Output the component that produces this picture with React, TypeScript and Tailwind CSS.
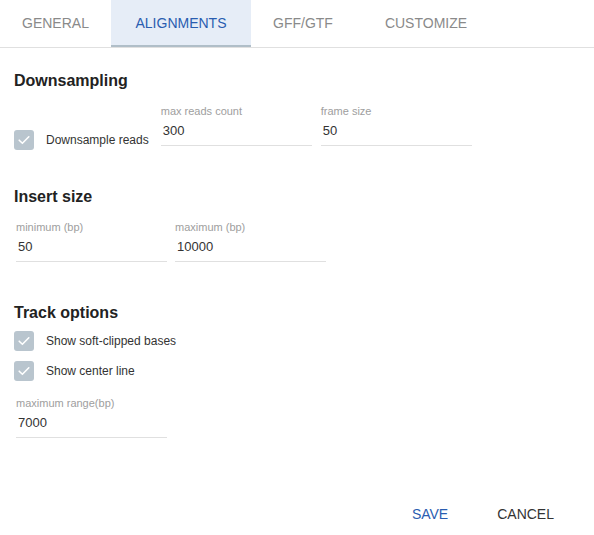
import React from "react";

const tabs = [
  { name: "GENERAL", w: "w-[111px]" },
  { name: "ALIGNMENTS", w: "w-[140px]" },
  { name: "GFF/GTF", w: "w-[104px]" },
  { name: "CUSTOMIZE", w: "w-[142px]" },
];

function Check() {
  return (
    <span className="flex h-[20px] w-[20px] shrink-0 items-center justify-center rounded-[3px] bg-[#b9c5ce]">
      <svg width="20" height="20" viewBox="0 0 20 20" fill="none">
        <path
          d="M5.2 10.2 L8.4 13.3 L14.8 6.8"
          stroke="#ffffff"
          strokeWidth="1.6"
          strokeLinecap="round"
          strokeLinejoin="round"
        />
      </svg>
    </span>
  );
}

function Field({ label, value }: { label: string; value: string }) {
  return (
    <div className="w-[151px]">
      <div className="h-[13px] text-[11px] leading-[13px] text-[#9e9e9e]">
        {label}
      </div>
      <div className="mt-[3px] border-b border-[#e0e0e0] pb-[4px] pl-[2px] text-[13px] leading-[20px] text-[#333333]">
        {value}
      </div>
    </div>
  );
}

function Heading({ children }: { children: React.ReactNode }) {
  return (
    <h2 className="text-[16px] font-bold leading-[20px] text-[#222222]">
      {children}
    </h2>
  );
}

export default function App() {
  return (
    <div
      className="h-[535px] w-[594px] bg-white"
      style={{ fontFamily: '"Liberation Sans", Arial, sans-serif' }}
    >
      {/* Tabs */}
      <div className="flex border-b border-[#e0e0e0]">
        {tabs.map((t) => (
          <div
            key={t.name}
            className={
              t.name === "ALIGNMENTS"
                ? `flex h-[47px] ${t.w} items-center justify-center border-b-2 border-[#b0bec8] bg-[#e6edf7] pt-[1px] text-[14px] text-[#2a5db0]`
                : `flex h-[47px] ${t.w} items-center justify-center border-b-2 border-transparent pt-[1px] text-[14px] text-[#8a8a8a]`
            }
          >
            {t.name}
          </div>
        ))}
      </div>

      <div className="pl-[14px]">
        {/* Downsampling */}
        <div className="pt-[23px]">
          <Heading>Downsampling</Heading>
        </div>
        <div className="mt-[14px] flex items-start">
          <div className="mt-[25px] flex items-center gap-[12px]">
            <Check />
            <span className="text-[12px] leading-[20px] text-[#333333]">
              Downsample reads
            </span>
          </div>
          <div className="ml-[12px] flex gap-[9px]">
            <Field label="max reads count" value="300" />
            <Field label="frame size" value="50" />
          </div>
        </div>

        {/* Insert size */}
        <div className="mt-[37px]">
          <Heading>Insert size</Heading>
        </div>
        <div className="mt-[14px] flex gap-[8px] pl-[2px]">
          <Field label="minimum (bp)" value="50" />
          <Field label="maximum (bp)" value="10000" />
        </div>

        {/* Track options */}
        <div className="mt-[41px]">
          <Heading>Track options</Heading>
        </div>
        <div className="mt-[8px] flex flex-col gap-[10px]">
          <div className="flex items-center gap-[12px]">
            <Check />
            <span className="text-[12px] leading-[20px] text-[#333333]">
              Show soft-clipped bases
            </span>
          </div>
          <div className="flex items-center gap-[12px]">
            <Check />
            <span className="text-[12px] leading-[20px] text-[#333333]">
              Show center line
            </span>
          </div>
        </div>
        <div className="mt-[16px] pl-[2px]">
          <Field label="maximum range(bp)" value="7000" />
        </div>
      </div>

      {/* Actions */}
      <div className="mt-[58px] flex justify-end gap-[17px] pr-[24px]">
        <button className="px-4 py-2 text-[14px] leading-[20px] text-[#2a5db0]">
          SAVE
        </button>
        <button className="px-4 py-2 text-[14px] leading-[20px] text-[#333333]">
          CANCEL
        </button>
      </div>
    </div>
  );
}
